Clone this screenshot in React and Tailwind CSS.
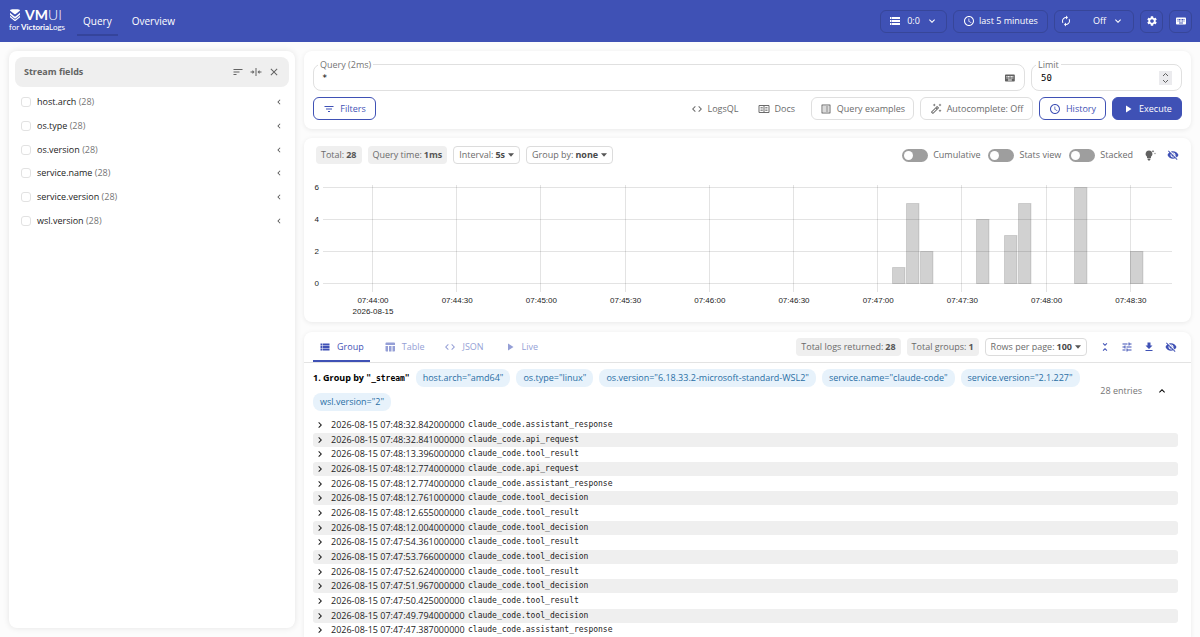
import {
    MdAccessTime,
    MdAutorenew,
    MdClose,
    MdCode,
    MdFileDownload,
    MdFilterList,
    MdKeyboard,
    MdKeyboardArrowDown,
    MdKeyboardArrowLeft,
    MdKeyboardArrowRight,
    MdKeyboardArrowUp,
    MdListAlt,
    MdOutlineAutoFixHigh,
    MdPlayArrow,
    MdSettings,
    MdSort,
    MdStorage,
    MdTableChart,
    MdTune,
    MdUnfoldLess,
    MdViewList,
    MdVisibilityOff,
} from "react-icons/md";

const streamFields = ["host.arch", "os.type", "os.version", "service.name", "service.version", "wsl.version"];

const streamTags = [
    'host.arch="amd64"',
    'os.type="linux"',
    'os.version="6.18.33.2-microsoft-standard-WSL2"',
    'service.name="claude-code"',
    'service.version="2.1.227"',
    'wsl.version="2"',
];

const logs = [
    ["2026-08-15 07:48:32.842000000", "claude_code.assistant_response"],
    ["2026-08-15 07:48:32.841000000", "claude_code.api_request"],
    ["2026-08-15 07:48:13.396000000", "claude_code.tool_result"],
    ["2026-08-15 07:48:12.774000000", "claude_code.api_request"],
    ["2026-08-15 07:48:12.774000000", "claude_code.assistant_response"],
    ["2026-08-15 07:48:12.761000000", "claude_code.tool_decision"],
    ["2026-08-15 07:48:12.655000000", "claude_code.tool_result"],
    ["2026-08-15 07:48:12.004000000", "claude_code.tool_decision"],
    ["2026-08-15 07:47:54.361000000", "claude_code.tool_result"],
    ["2026-08-15 07:47:53.766000000", "claude_code.tool_decision"],
    ["2026-08-15 07:47:52.624000000", "claude_code.tool_result"],
    ["2026-08-15 07:47:51.967000000", "claude_code.tool_decision"],
    ["2026-08-15 07:47:50.425000000", "claude_code.tool_result"],
    ["2026-08-15 07:47:49.794000000", "claude_code.tool_decision"],
    ["2026-08-15 07:47:47.387000000", "claude_code.assistant_response"],
];

const ticks = ["07:44:00", "07:44:30", "07:45:00", "07:45:30", "07:46:00", "07:46:30", "07:47:00", "07:47:30", "07:48:00", "07:48:30"];

// [x, hits] of each 5s bucket
const bars = [
    [892, 1],
    [906, 5],
    [920, 2],
    [976, 4],
    [1004, 3],
    [1018, 5],
    [1074, 6],
    [1130, 2],
];

function Logo() {
    return (
        <a href="#/" className="flex flex-col text-white">
            <span className="flex items-center gap-1">
                <svg viewBox="0 0 22 24" className="h-3 w-3" fill="currentColor">
                    <path d="M2 1.5C5 .2 17 .2 20 1.5c1.5.7 1 1.6 0 2.5l-7.500 6.200c-.8.700-2.200.7-3 0L2 4C1 3.100.5 2.200 2 1.500z" />
                    <path d="M1 7.500l8.500 7c.9.700 2.100.7 3 0l8.500-7v3.800l-8.500 7c-.9.700-2.100.7-3 0L1 11.300z" />
                    <path d="M1 13.300l8.500 7c.9.700 2.100.7 3 0l8.500-7v3.400l-8.500 6.700c-.9.700-2.100.7-3 0L1 16.700z" />
                </svg>
                <span className="font-['Lato'] text-[14px] leading-3 font-bold">
                    VM<span className="font-light">UI</span>
                </span>
            </span>
            <span className="font-['Lato'] text-[8px] leading-3">
                for <b>Victoria</b>Logs
            </span>
        </a>
    );
}

function BookIcon({ className }) {
    return (
        <svg viewBox="0 0 24 24" className={className} fill="none" stroke="currentColor" strokeWidth="2">
            <path d="M2 5h20v14H2zM12 5v14" />
            <path d="M5 9h4.500M5 12h4.500M5 15h4.500M14.500 9H19M14.500 12H19M14.500 15H19" strokeWidth="1.5" />
        </svg>
    );
}

function HeaderButton({ label, className, children }) {
    return (
        <button aria-label={label} className={`flex h-[23px] items-center rounded-md border border-[#374699] ${className}`}>
            {children}
        </button>
    );
}

function Header() {
    return (
        <header className="flex h-[42px] items-center bg-[#3f51b5] pr-2 pl-[9px] text-white">
            <Logo />
            <nav className="ml-3 flex text-[10px]">
                <a href="#/query" className="flex h-[30px] items-center border-b-2 border-[#35449b] px-1.5 pt-0.5">Query</a>
                <a href="#/overview" className="ml-2 flex h-[30px] items-center border-b-2 border-transparent px-1.5 pt-0.5">Overview</a>
            </nav>
            <div className="ml-auto flex items-center gap-1.5">
                <HeaderButton className="w-[67px] justify-center gap-1.5">
                    <MdStorage className="size-3" />
                    0:0
                    <MdKeyboardArrowDown className="size-3" />
                </HeaderButton>
                <HeaderButton className="w-[95px] justify-center gap-1">
                    <MdAccessTime className="size-3" />
                    last 5 minutes
                </HeaderButton>
                <div className="flex h-[23px] w-20 items-center justify-between rounded-md border border-[#374699] px-[5px]">
                    <button aria-label="Refresh">
                        <MdAutorenew className="size-3" />
                    </button>
                    <button className="flex items-center gap-1.5 pr-1">
                        Off
                        <MdKeyboardArrowDown className="size-3" />
                    </button>
                </div>
                <HeaderButton label="Settings" className="w-[23px] justify-center">
                    <MdSettings className="size-3" />
                </HeaderButton>
                <HeaderButton label="Shortcut keys" className="w-[23px] justify-center">
                    <MdKeyboard className="size-3" />
                </HeaderButton>
            </div>
        </header>
    );
}

function Sidebar() {
    return (
        <aside className="w-[286px] shrink-0 rounded-lg bg-white p-1.5 shadow-[0_0_6px_rgba(0,0,0,0.1)]">
            <div className="flex h-[30px] items-center rounded-lg bg-[#efefef] px-[9px] text-[#636363]">
                <h2 className="font-bold">Stream fields</h2>
                <div className="ml-auto flex items-center gap-1.5">
                    <button aria-label="Sort">
                        <MdSort className="size-3" />
                    </button>
                    <button aria-label="Collapse width">
                        <svg viewBox="0 0 24 24" className="size-3" fill="currentColor">
                            <path d="M11 4h2v16h-2zM1 11h4V8l4 4-4 4v-3H1zM23 11h-4V8l-4 4 4 4v-3h4z" />
                        </svg>
                    </button>
                    <button aria-label="Close">
                        <MdClose className="size-3" />
                    </button>
                </div>
            </div>
            <ul className="mt-[3px] grid h-[143px] auto-rows-fr">
                {streamFields.map((name) => (
                    <li key={name} className="flex items-center pr-[5px] pl-1.5">
                        <label className="flex items-center gap-1.5 text-[#1c1c1c]">
                            <input type="checkbox" className="size-2.5 appearance-none rounded-[3px] border border-[#e2e2e2]" />
                            <span>
                                {name} <span className="text-[#757575]">(28)</span>
                            </span>
                        </label>
                        <button aria-label={`Expand ${name}`} className="ml-auto text-[#555555]">
                            <MdKeyboardArrowLeft className="size-2.5" />
                        </button>
                    </li>
                ))}
            </ul>
        </aside>
    );
}

function OutlineButton({ icon: Icon, className, children }) {
    return (
        <button className={`flex h-[23px] items-center justify-center gap-[5px] rounded-md border ${className}`}>
            <Icon className="size-3" />
            {children}
        </button>
    );
}

function QueryPanel() {
    return (
        <section className="rounded-lg bg-white px-[9px] pt-[13px] pb-[9px] shadow-[0_1px_5px_rgba(0,0,0,0.08)]">
            <div className="flex gap-1.5">
                <div className="relative flex h-[27px] flex-1 items-center rounded-lg border border-[#e0e0e0] px-2">
                    <label htmlFor="query" className="absolute -top-1.5 left-1 bg-white px-0.5 leading-3 text-[#757575]">Query (2ms)</label>
                    <input id="query" defaultValue="*" className="w-full font-['DejaVu_Sans_Mono',monospace] text-[9px] outline-none" />
                    <MdKeyboard className="size-3 text-[#616161]" />
                </div>
                <div className="relative flex h-[27px] w-[151px] items-center rounded-lg border border-[#e0e0e0] px-[9px]">
                    <label htmlFor="limit" className="absolute -top-1.5 left-1 bg-white px-0.5 leading-3 text-[#757575]">Limit</label>
                    <input id="limit" defaultValue="50" className="w-full font-['DejaVu_Sans_Mono',monospace] text-[9px] outline-none" />
                    <svg viewBox="0 0 13 14" className="h-3.5 w-[13px] shrink-0 bg-[#ebebee]" fill="none" stroke="#606060">
                        <path d="M4 5l2.500-2.500L9 5M4 9l2.500 2.500L9 9" />
                    </svg>
                </div>
            </div>
            <div className="mt-1.5 flex items-center gap-1.5 text-[#6b6b6b]">
                <OutlineButton icon={MdFilterList} className="w-[63px] border-[#3f51b5] text-[#3f51b5]">Filters</OutlineButton>
                <a href="#logsql" className="mr-3.5 ml-auto flex items-center gap-1">
                    <MdCode className="size-3" />
                    LogsQL
                </a>
                <a href="#docs" className="mr-2.5 flex items-center gap-1">
                    <BookIcon className="size-3" />
                    Docs
                </a>
                <OutlineButton icon={MdListAlt} className="w-[103px] border-[#dfdfdf]">Query examples</OutlineButton>
                <OutlineButton icon={MdOutlineAutoFixHigh} className="w-[113px] border-[#dfdfdf]">Autocomplete: Off</OutlineButton>
                <OutlineButton icon={MdAccessTime} className="w-[67px] border-[#3f51b5] text-[#3f51b5]">History</OutlineButton>
                <OutlineButton icon={MdPlayArrow} className="w-[70px] border-[#3f51b5] bg-[#3f51b5] text-white">Execute</OutlineButton>
            </div>
        </section>
    );
}

function Stat({ label, value }) {
    return (
        <span className="flex h-[18px] items-center gap-0.5 rounded-sm bg-[#efefef] px-[5px] text-[#6b6b6b]">
            {label} <b className="font-bold text-[#555555]">{value}</b>
        </span>
    );
}

function Picker({ label, value }) {
    return (
        <button className="flex h-[18px] items-center gap-0.5 rounded-sm border border-[#dcdcdc] px-[5px] text-[#6b6b6b]">
            {label} <b className="font-bold text-[#4a4a4a]">{value}</b>
            <svg viewBox="0 0 10 6" className="ml-px h-1 w-1.5" fill="#555555">
                <path d="M0 0h10L5 6z" />
            </svg>
        </button>
    );
}

function Toggle({ label }) {
    return (
        <label className="flex items-center gap-[5px] text-[#6b6b6b]">
            <input type="checkbox" className="peer sr-only" />
            <span className="flex h-[13px] w-[26px] items-center rounded-full bg-[#9e9e9e] p-0.5">
                <span className="size-[9px] rounded-full bg-white" />
            </span>
            {label}
        </label>
    );
}

function Chart() {
    return (
        <svg viewBox="304 172 887 150" className="block w-full font-['Liberation_Sans',Arial,sans-serif] text-[8px]" fill="#1c1c1c">
            {[6, 4, 2, 0].map((n) => (
                <g key={n}>
                    <rect x="323" y={283 - n * 16} width="849" height="1" fill="#000000" fillOpacity="0.11" />
                    <text x="319" y={286 - n * 16} textAnchor="end">{n}</text>
                </g>
            ))}
            {ticks.map((time, i) => (
                <g key={time}>
                    <rect x={Math.round(372 + i * 84.2)} y="185" width="1" height="107" fill="#000000" fillOpacity="0.11" />
                    <text x={373 + i * 84.2} y="303" textAnchor="middle">{time}</text>
                </g>
            ))}
            <text x="373" y="314" textAnchor="middle">2026-08-15</text>
            {bars.map(([x, hits]) => (
                <rect key={x} x={x + 0.5} y={283.5 - hits * 16} width="12.500" height={hits * 16} fill="#000000" fillOpacity="0.18" stroke="#000000" strokeOpacity="0.12" />
            ))}
        </svg>
    );
}

function HitsPanel() {
    return (
        <section className="mt-[9px] rounded-lg bg-white shadow-[0_1px_5px_rgba(0,0,0,0.08)]">
            <div className="flex h-[34px] items-center gap-1.5 px-3">
                <Stat label="Total:" value="28" />
                <Stat label="Query time:" value="1ms" />
                <Picker label="Interval:" value="5s" />
                <Picker label="Group by:" value="none" />
                <div className="ml-auto flex items-center gap-2">
                    <Toggle label="Cumulative" />
                    <Toggle label="Stats view" />
                    <Toggle label="Stacked" />
                    <button aria-label="Tips" className="mx-[3px] text-[#616161]">
                        <svg viewBox="0 0 24 24" className="size-3" fill="currentColor">
                            <path d="M10 3a7 7 0 0 0-4 12.700V18h8v-2.300A7 7 0 0 0 10 3zM7 19h6v1.500L11.500 23h-3L7 20.500z" />
                            <path d="M18 2l.8 1.700 1.700.8-1.700.8L18 7l-.8-1.700-1.700-.8 1.700-.8zM22 7l.6 1.400L24 9l-1.400.6L22 11l-.6-1.400L20 9l1.400-.6z" />
                        </svg>
                    </button>
                    <button aria-label="Hide chart" className="text-[#3f51b5]">
                        <MdVisibilityOff className="size-3" />
                    </button>
                </div>
            </div>
            <Chart />
        </section>
    );
}

function Tab({ icon: Icon, active, children }) {
    return (
        <button
            className={
                active
                    ? "flex h-full items-center gap-1.5 border-b-2 border-[#3f51b5] px-1.5 pt-0.5 text-[#3f51b5]"
                    : "flex h-full items-center gap-1.5 border-b-2 border-transparent px-1.5 pt-0.5 text-[#959fd6]"
            }
        >
            <Icon className="size-3" />
            {children}
        </button>
    );
}

function LogsPanel() {
    return (
        <section className="mt-2.5 rounded-t-lg bg-white shadow-[0_1px_5px_rgba(0,0,0,0.08)]">
            <div className="flex h-[31px] items-center border-b border-[#e3e3e3] pr-3.5 pl-[9px]">
                <div className="flex h-full gap-2">
                    <Tab icon={MdViewList} active>Group</Tab>
                    <Tab icon={MdTableChart}>Table</Tab>
                    <Tab icon={MdCode}>JSON</Tab>
                    <Tab icon={MdPlayArrow}>Live</Tab>
                </div>
                <div className="ml-auto flex items-center gap-1.5">
                    <Stat label="Total logs returned:" value="28" />
                    <Stat label="Total groups:" value="1" />
                    <Picker label="Rows per page:" value="100" />
                    <div className="ml-1.5 flex gap-2.5 text-[#3f51b5]">
                        <button aria-label="Collapse all"><MdUnfoldLess className="size-3" /></button>
                        <button aria-label="Group settings"><MdTune className="size-3" /></button>
                        <button aria-label="Download"><MdFileDownload className="size-3" /></button>
                        <button aria-label="Hide logs"><MdVisibilityOff className="size-3" /></button>
                    </div>
                </div>
            </div>
            <div className="flex items-center pr-[23px] pl-[9px]">
                <div className="flex flex-1 flex-wrap items-center gap-1.5 pt-1.5 pb-[7px]">
                    <h3 className="font-bold text-black">
                        1. Group by <span className="font-['DejaVu_Sans_Mono',monospace] text-[8px]">"_stream"</span>
                    </h3>
                    {streamTags.map((tag) => (
                        <span key={tag} className="flex h-[18px] items-center rounded-lg bg-[#e7f2fb] px-[7px] text-[#2a6fa5]">{tag}</span>
                    ))}
                </div>
                <span className="ml-3 text-[#757575]">28 entries</span>
                <button aria-label="Collapse group" className="ml-3.5 text-black">
                    <MdKeyboardArrowUp className="size-3" />
                </button>
            </div>
            <ul className="grid h-[220px] auto-rows-fr pr-[13px] pl-[9px]">
                {logs.map(([time, message], i) => (
                    <li key={i} className="flex h-3.5 items-center rounded-[3px] pl-px text-[#1c1c1c] even:bg-[#efefef]">
                        <MdKeyboardArrowRight className="size-3" />
                        <span className="ml-[5px] w-[137px]">{time}</span>
                        <span className="font-['DejaVu_Sans_Mono',monospace] text-[8px]">{message}</span>
                    </li>
                ))}
            </ul>
        </section>
    );
}

export default function App() {
    return (
        <div className="flex h-screen flex-col overflow-hidden bg-[#fcfcfc] font-['Open_Sans','Noto_Sans',sans-serif] text-[9px] leading-3">
            <Header />
            <main className="flex min-h-0 flex-1 gap-[9px] px-[9px] pt-[9px]">
                <div className="flex pb-[9px]">
                    <Sidebar />
                </div>
                <div className="min-w-0 flex-1">
                    <QueryPanel />
                    <HitsPanel />
                    <LogsPanel />
                </div>
            </main>
        </div>
    );
}
